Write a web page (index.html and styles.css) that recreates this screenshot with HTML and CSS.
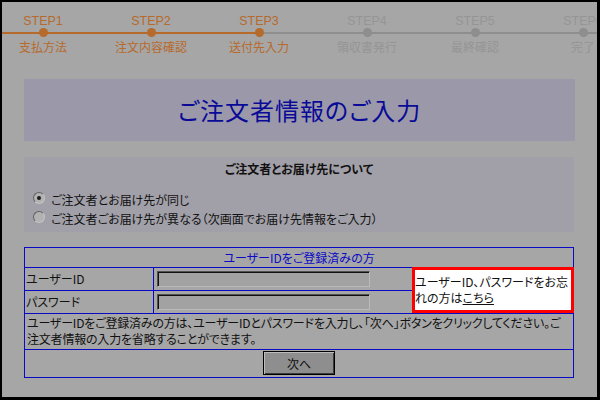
FILE: index.html
```html
<!DOCTYPE html>
<html lang="ja">
<head>
    <meta charset="UTF-8">
    <title>ご注文者情報のご入力</title>
    <link rel="stylesheet" href="styles.css">
</head>
<body>
    <div class="screen">
        <div class="steps">
            <div class="step done">
                <div class="step-no">STEP1</div>
                <div class="step-track"><span class="dot"></span></div>
                <div class="step-name">支払方法</div>
            </div>
            <div class="step done">
                <div class="step-no">STEP2</div>
                <div class="step-track"><span class="dot"></span></div>
                <div class="step-name">注文内容確認</div>
            </div>
            <div class="step current">
                <div class="step-no">STEP3</div>
                <div class="step-track"><span class="dot"></span></div>
                <div class="step-name">送付先入力</div>
            </div>
            <div class="step">
                <div class="step-no">STEP4</div>
                <div class="step-track"><span class="dot"></span></div>
                <div class="step-name">領収書発行</div>
            </div>
            <div class="step">
                <div class="step-no">STEP5</div>
                <div class="step-track"><span class="dot"></span></div>
                <div class="step-name">最終確認</div>
            </div>
            <div class="step">
                <div class="step-no">STEP6</div>
                <div class="step-track"><span class="dot"></span></div>
                <div class="step-name">完了</div>
            </div>
        </div>

        <div class="title-box">
            <h1>ご注文者情報のご入力</h1>
        </div>

        <div class="ship-box">
            <h2>ご注文者とお届け先について</h2>
            <label class="radio-row"><span class="radio checked"></span>ご注文者とお届け先が同じ</label>
            <label class="radio-row"><span class="radio"></span>ご注文者ごお届け先が異なる（次画面でお届け先情報をご入力）</label>
        </div>

        <div class="login">
            <div class="login-head">ユーザーIDをご登録済みの方</div>
            <div class="cell label">ユーザーID</div>
            <div class="cell field"><input type="text" class="text-in"></div>
            <div class="forgot">ユーザーID、パスワードをお忘れの方は<a href="#">こちら</a></div>
            <div class="cell label last">パスワード</div>
            <div class="cell field last"><input type="password" class="text-in"></div>
            <div class="login-note">ユーザーIDをご登録済みの方は、ユーザーIDとパスワードを入力し、「次へ」ボタンをクリックしてください。ご注文者情報の入力を省略することができます。</div>
            <div class="login-foot"><button class="next-btn">次へ</button></div>
        </div>
    </div>
</body>
</html>
```

FILE: styles.css
```css
* {
    margin: 0;
    padding: 0;
    box-sizing: border-box;
}

html, body {
    width: 100%;
    height: 100%;
    background: #000;
    overflow: hidden;
}

.screen {
    width: 600px;
    height: 400px;
    border-style: solid;
    border-color: #000;
    border-width: 2px 3px 3px 2px;
    background: #a6a6a6;
    overflow: hidden;
    padding-top: 12px;
    font-family: "Noto Sans CJK JP", sans-serif;
    font-size: 12px;
    font-feature-settings: "palt" 1;
    color: #111;
}

/* step bar */
.steps {
    display: flex;
    margin-left: -13px;
}

.step {
    flex: 0 0 108px;
    text-align: center;
    color: #959595;
}

.step-no {
    font-family: "Liberation Sans", Arial, sans-serif;
    font-size: 12.5px;
    line-height: 14px;
    height: 14px;
}

.step-track {
    height: 9px;
    display: flex;
    justify-content: center;
    background: linear-gradient(#8e8e8e, #8e8e8e) no-repeat 0 4px / 100% 2px;
}

.step.done .step-track {
    background-image: linear-gradient(#b66a2c, #b66a2c);
}

.step.current .step-track {
    background-image: linear-gradient(90deg, #b66a2c 50%, #8e8e8e 50%);
}

.dot {
    width: 9px;
    height: 9px;
    border-radius: 50%;
    background: #8e8e8e;
}

.step.done .dot,
.step.current .dot {
    background: #b66a2c;
}

.step.done,
.step.current {
    color: #b66a2c;
}

.step-name {
    margin-top: 2px;
    line-height: 16px;
    font-size: 12px;
}

/* title */
.title-box {
    width: 551px;
    height: 62px;
    margin: 24px 0 0 22px;
    background: #9b99a9;
    display: flex;
    align-items: center;
    justify-content: center;
}

.title-box h1 {
    font-size: 24px;
    font-weight: normal;
    color: #0a0a98;
    line-height: 30px;
    letter-spacing: 1px;
}

/* shipping choice */
.ship-box {
    width: 550px;
    margin: 16px 0 0 22px;
    padding: 4px 0 4px 9px;
    background: #a1a0a8;
}

.ship-box h2 {
    font-size: 12px;
    line-height: 16px;
    text-align: center;
    margin: 0 0 13px -9px;
}

.radio-row {
    display: flex;
    align-items: center;
    height: 19px;
    line-height: 19px;
}

.radio {
    width: 12px;
    height: 12px;
    border-radius: 50%;
    margin: 0 6px 4px 0;
    border: 1px solid;
    border-color: #626262 #c4c4c4 #c4c4c4 #626262;
    background: #b2b2b2;
    display: flex;
    align-items: center;
    justify-content: center;
}

.radio.checked::after {
    content: "";
    width: 4px;
    height: 4px;
    border-radius: 50%;
    background: #1a1a1a;
}

/* login table */
.login {
    width: 550px;
    margin: 15px 0 0 22px;
    border: 1px solid #0a0ac4;
    display: grid;
    grid-template-columns: 129px 258px 161px;
    grid-template-rows: 20px 23px 22px 37px 27px;
}

.login-head {
    grid-column: 1 / -1;
    border-bottom: 1px solid #0a0ac4;
    text-align: center;
    line-height: 19px;
    color: #0a0ac4;
}

.cell {
    border-bottom: 1px solid #0a0ac4;
}

.cell.last {
    border-bottom: none;
}

.cell.label {
    border-right: 1px solid #0a0ac4;
    padding-left: 1px;
    line-height: 22px;
}

.cell.field {
    padding: 3px 0 0 3px;
}

.text-in {
    display: block;
    width: 213px;
    height: 16px;
    border: 1px solid;
    border-color: #505050 #bababa #bababa #505050;
    box-shadow: inset 1px 1px 0 #111;
    background: #a2a2a2;
    outline: none;
}

.forgot {
    grid-column: 3;
    grid-row: 2 / 4;
    margin: -1px -1px 0 0;
    border: 3px solid #f00;
    background: #fff;
    padding-top: 4px;
    line-height: 16px;
    color: #111;
}

.forgot a {
    color: #111;
}

.login-note {
    grid-column: 1 / -1;
    border-top: 1px solid #0a0ac4;
    border-bottom: 1px solid #0a0ac4;
    padding: 1px 6px 0 2px;
    line-height: 16px;
    letter-spacing: -0.2px;
}

.login-foot {
    grid-column: 1 / -1;
    display: flex;
    justify-content: center;
    padding-top: 1px;
}

.next-btn {
    width: 72px;
    height: 24px;
    border: 1px solid #000;
    box-shadow: inset 1px 1px 0 #bcbcbc, inset -1px -1px 0 #3a3a3a;
    background: #8e8e8e;
    font-family: "Noto Sans CJK JP", sans-serif;
    font-size: 12px;
    color: #111;
}
```
